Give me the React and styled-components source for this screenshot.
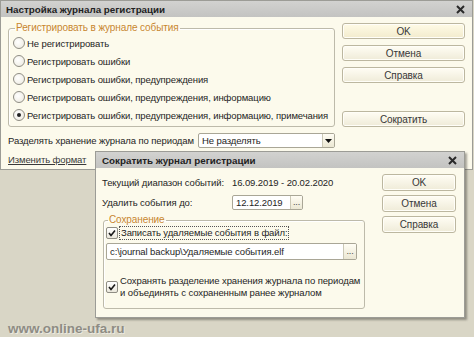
import React from 'react'
import styled, { createGlobalStyle } from 'styled-components'

const Global = createGlobalStyle`
  html, body {
    margin: 0;
    padding: 0;
    background: #d9d6c6;
  }
  body {
    font-family: "Liberation Sans", Arial, sans-serif;
    font-size: 9.5px;
    letter-spacing: -0.1px;
    color: #1e1e1e;
  }
`

const Desktop = styled.div`
  position: relative;
  width: 474px;
  height: 337px;
  overflow: hidden;
  background: #d9d6c6;
`

const Window = styled.div`
  box-sizing: border-box;
  display: flex;
  flex-direction: column;
  background: #fcfaec;
  border: 1px solid #9c9c96;
  width: ${p => p.w}px;
  height: ${p => p.h}px;
`

const FloatingWindow = styled(Window)`
  position: absolute;
  left: 95px;
  top: 151px;
  box-shadow: 2px 2px 2px rgba(60, 58, 50, 0.45);
`

const TitleBar = styled.div`
  flex: none;
  height: 16px;
  display: flex;
  align-items: center;
  justify-content: space-between;
  padding: 0 7px 0 ${p => p.pad || 5}px;
  background: linear-gradient(#d2d2d0, #c3c3c1);
  font-weight: bold;
  font-size: 9.8px;
  letter-spacing: 0;
  color: #222;
`

const Close = () => (
  <svg width="9" height="9" viewBox="0 0 9 9">
    <path d="M1 1 L8 8 M8 1 L1 8" stroke="#2a2a2a" strokeWidth="2" />
  </svg>
)

const MainBody = styled.div`
  display: grid;
  grid-template-columns: 327px 123px;
  column-gap: 7px;
  padding: 5px 7px 0 7px;
`

const SubBody = styled.div`
  display: grid;
  grid-template-columns: 263px 74px;
  column-gap: 17px;
  padding: 6px 8px 0 6px;
`

const Column = styled.div`
  display: flex;
  flex-direction: column;
`

const ButtonColumn = styled.div`
  display: flex;
  flex-direction: column;
  gap: ${p => p.gap || 5}px;
  padding-top: ${p => p.top || 0}px;
`

const Button = styled.div`
  box-sizing: border-box;
  height: ${p => p.h || 16}px;
  display: flex;
  align-items: center;
  justify-content: center;
  border: 1px solid #bcb7a0;
  border-radius: 3px;
  background: ${p => p.primary
    ? 'linear-gradient(#fffbe6, #f2ebcd)'
    : 'linear-gradient(#fffdf4, #efebd8)'};
  box-shadow: inset 0 0 0 1px #fffef8;
  color: #383838;
  font-size: 10px;
  margin-top: ${p => p.mt || 0}px;
`

const Group = styled.fieldset`
  margin: 0;
  padding: 0 0 ${p => p.pb || 0}px ${p => p.pl || 3}px;
  border: 1px solid #bdbaaa;
  border-radius: 3px;
  box-shadow: inset 1px 1px 0 #ffffff;
  min-width: 0;
`

const Legend = styled.legend`
  padding: 0 1px;
  margin-left: 2px;
  color: #c8862f;
  line-height: 12px;
  font-size: 10px;
`

const RadioRow = styled.div`
  height: 18px;
  display: flex;
  align-items: center;
  gap: 2px;
  white-space: nowrap;
`

const RadioCircle = styled.span`
  box-sizing: border-box;
  width: 12px;
  height: 12px;
  border-radius: 50%;
  border: 1px solid #8f8d84;
  background: radial-gradient(circle at 40% 40%, #ffffff, #ebe8dc);
  display: flex;
  align-items: center;
  justify-content: center;
  &::after {
    content: '';
    width: 4px;
    height: 4px;
    border-radius: 50%;
    background: ${p => (p.checked ? '#222' : 'transparent')};
  }
`

const FieldRow = styled.div`
  height: ${p => p.h || 15}px;
  display: flex;
  align-items: center;
  margin-top: ${p => p.mt || 0}px;
  white-space: nowrap;
`

const Label = styled.span`
  width: ${p => p.w}px;
  flex: none;
`

const Input = styled.div`
  box-sizing: border-box;
  width: ${p => p.w}px;
  height: ${p => p.h || 15}px;
  display: flex;
  align-items: center;
  border: 1px solid #a9a696;
  border-radius: 2px;
  background: #fff;
  overflow: hidden;
`

const InputText = styled.span`
  flex: 1;
  padding-left: 3px;
  white-space: nowrap;
  overflow: hidden;
`

const InputButton = styled.span`
  flex: none;
  width: ${p => p.w || 13}px;
  height: 100%;
  box-sizing: border-box;
  border-left: 1px solid #cbc8b6;
  background: linear-gradient(#fffdf4, #ebe7d3);
  display: flex;
  align-items: center;
  justify-content: center;
  color: #444;
  font-size: 9px;
  line-height: 1;
`

const Link = styled.span`
  color: #3a3a3a;
  text-decoration: underline;
`

const CheckRow = styled.div`
  display: flex;
  align-items: ${p => p.top ? 'flex-start' : 'center'};
  gap: 2px;
  margin-top: ${p => p.mt || 0}px;
  line-height: 12px;
  white-space: nowrap;
`

const Check = styled.span`
  box-sizing: border-box;
  flex: none;
  width: 12px;
  height: 12px;
  border: 1px solid #8f8d84;
  border-radius: 2px;
  background: linear-gradient(#ffffff, #ebe8dc);
  display: flex;
  align-items: center;
  justify-content: center;
  margin-top: ${p => p.mt || 0}px;
`

const Focused = styled.span`
  outline: 1px dotted #555;
  padding: 0 1px;
`

const Tick = () => (
  <svg width="8" height="8" viewBox="0 0 8 8">
    <path d="M1 4 L3 6.5 L7 1.5" stroke="#1a1a1a" strokeWidth="1.6" fill="none" />
  </svg>
)

const Watermark = styled.div`
  position: absolute;
  left: 8px;
  bottom: 1px;
  font-family: "Liberation Sans", Arial, sans-serif;
  font-weight: bold;
  font-size: 13.5px;
  letter-spacing: 0;
  color: #8e8c84;
  text-shadow: 1px 1px 0 #ebe9df;
`

const options = [
  'Не регистрировать',
  'Регистрировать ошибки',
  'Регистрировать ошибки, предупреждения',
  'Регистрировать ошибки, предупреждения, информацию',
  'Регистрировать ошибки, предупреждения, информацию, примечания',
]

export default function App() {
  return (
    <Desktop>
      <Global />

      <Window w={473} h={170}>
        <TitleBar pad={5}>
          <span>Настройка журнала регистрации</span>
          <Close />
        </TitleBar>
        <MainBody>
          <Column>
            <Group pl={4} pb={2}>
              <Legend>Регистрировать в журнале события</Legend>
              {options.map((o, i) => (
                <RadioRow key={o}>
                  <RadioCircle checked={i === 4} />
                  {o}
                </RadioRow>
              ))}
            </Group>
            <FieldRow mt={6}>
              <Label w={190}>Разделять хранение журнала по периодам</Label>
              <Input w={139}>
                <InputText>Не разделять</InputText>
                <InputButton w={12}>
                  <svg width="7" height="4" viewBox="0 0 7 4"><path d="M0 0 H7 L3.5 4 Z" fill="#111" /></svg>
                </InputButton>
              </Input>
            </FieldRow>
            <FieldRow mt={4} h={14}>
              <Link>Изменить формат</Link>
            </FieldRow>
          </Column>
          <ButtonColumn top={1} gap={6}>
            <Button primary>OK</Button>
            <Button>Отмена</Button>
            <Button>Справка</Button>
            <Button mt={22}>Сократить</Button>
          </ButtonColumn>
        </MainBody>
      </Window>

      <FloatingWindow w={370} h={167}>
        <TitleBar pad={6}>
          <span>Сократить журнал регистрации</span>
          <Close />
        </TitleBar>
        <SubBody>
          <Column>
            <FieldRow h={16}>
              <Label w={130}>Текущий диапазон событий:</Label>
              16.09.2019 - 20.02.2020
            </FieldRow>
            <FieldRow h={16} mt={4}>
              <Label w={130}>Удалить события до:</Label>
              <Input w={71} h={15}>
                <InputText>12.12.2019</InputText>
                <InputButton w={12}>...</InputButton>
              </Input>
            </FieldRow>
            <Group pl={2} pb={9} style={{ marginTop: 4, marginLeft: 1 }}>
              <Legend>Сохранение</Legend>
              <CheckRow mt={1}>
                <Check><Tick /></Check>
                <Focused>Записать удаляемые события в файл:</Focused>
              </CheckRow>
              <Input w={251} h={17} style={{ marginTop: 4 }}>
                <InputText>c:\journal backup\Удаляемые события.elf</InputText>
                <InputButton w={13}>...</InputButton>
              </Input>
              <CheckRow top mt={15}>
                <Check mt={6}><Tick /></Check>
                <span>
                  Сохранять разделение хранения журнала по периодам<br />
                  и объединять с сохраненным ранее журналом
                </span>
              </CheckRow>
            </Group>
          </Column>
          <ButtonColumn gap={4}>
            <Button h={17}>OK</Button>
            <Button h={17}>Отмена</Button>
            <Button h={17}>Справка</Button>
          </ButtonColumn>
        </SubBody>
      </FloatingWindow>

      <Watermark>www.online-ufa.ru</Watermark>
    </Desktop>
  )
}
